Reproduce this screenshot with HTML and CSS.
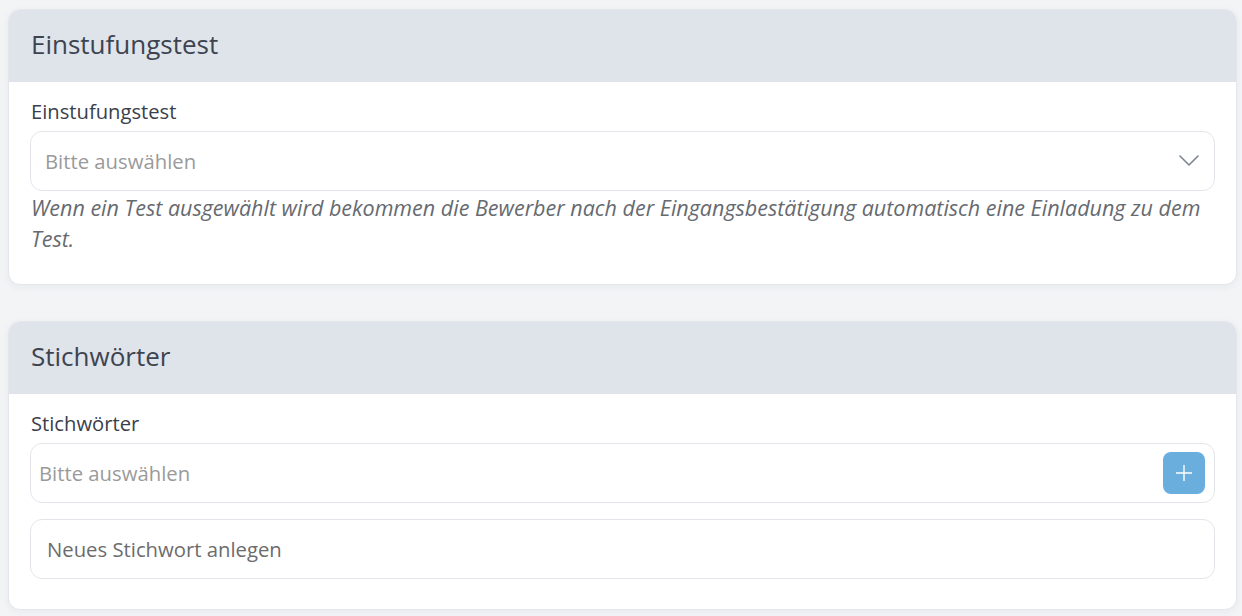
FILE: index.html
```html
<!DOCTYPE html>
<html lang="de">
<head>
<meta charset="utf-8">
<title>Einstufungstest</title>
<link rel="stylesheet" href="styles.css">
</head>
<body>
<main class="page">
  <section class="card card-test">
    <header class="card-header"><h2>Einstufungstest</h2></header>
    <div class="card-body">
      <label class="field-label">Einstufungstest</label>
      <div class="select">
        <span class="placeholder">Bitte auswählen</span>
        <svg class="chevron" width="20" height="12" viewBox="0 0 20 12"><path d="M1 1 L10 10 L19 1" fill="none" stroke="#7d8591" stroke-width="1.6" stroke-linecap="round" stroke-linejoin="round"/></svg>
      </div>
      <p class="help">Wenn ein Test ausgewählt wird bekommen die Bewerber nach der Eingangsbestätigung automatisch eine Einladung zu dem Test.</p>
    </div>
  </section>
  <section class="card card-tags">
    <header class="card-header"><h2>Stichwörter</h2></header>
    <div class="card-body">
      <label class="field-label">Stichwörter</label>
      <div class="tags-input">
        <span class="placeholder">Bitte auswählen</span>
        <button class="add-btn" type="button" aria-label="Hinzufügen">
          <svg width="18" height="18" viewBox="0 0 18 18"><path d="M9 1 V17 M1 9 H17" stroke="#ffffff" stroke-width="1.4"/></svg>
        </button>
      </div>
      <div class="text-input"><span class="value">Neues Stichwort anlegen</span></div>
    </div>
  </section>
</main>
</body>
</html>
```

FILE: styles.css
```css
* { box-sizing: border-box; }
html, body { margin: 0; padding: 0; }
body {
  background: #f3f4f6;
  font-family: "Open Sans", "Noto Sans", sans-serif;
  color: #3b414c;
  width: 1242px;
  height: 616px;
  overflow: hidden;
}
.page {
  padding: 9px 5px 0 8px;
  display: flex;
  flex-direction: column;
  gap: 36px;
}
.card {
  background: #ffffff;
  border: 1px solid #e3e6eb;
  border-radius: 12px;
  box-shadow: 0 2px 8px rgba(30, 40, 60, 0.05);
  overflow: hidden;
}
.card-header {
  background: #dfe3ea;
  height: 72px;
  display: flex;
  align-items: center;
  padding: 0 22px 4px;
}
.card-header h2 {
  margin: 0;
  font-weight: 400;
  font-size: 26px;
  color: #3d4450;
}
.card-body {
  padding: 16px 21px 30px 21px;
  display: flex;
  flex-direction: column;
}
.field-label {
  font-size: 20.2px;
  line-height: 27px;
  color: #3a404b;
  margin-left: 1px;
  margin-bottom: 6px;
}
.select, .tags-input, .text-input {
  height: 60px;
  border: 1px solid #e2e5ea;
  border-radius: 12px;
  display: flex;
  align-items: center;
  background: #fff;
}
.select { padding: 0 14px; justify-content: space-between; }
.placeholder, .value {
  font-size: 20.3px;
  color: #9a9a9a;
}
.value { color: #6c6c6c; }
.chevron { margin-right: 1px; }
.help {
  margin: 1px 0 0 1px;
  font-style: italic;
  font-size: 21.5px;
  line-height: 31px;
  color: #666a70;
}
.tags-input { padding: 0 9px 0 8px; justify-content: space-between; }
.add-btn {
  width: 42px;
  height: 42px;
  border: none;
  border-radius: 8px;
  background: #6aaede;
  display: flex;
  align-items: center;
  justify-content: center;
  padding: 0;
}
.text-input { margin-top: 16px; padding: 0 16px; }
```
